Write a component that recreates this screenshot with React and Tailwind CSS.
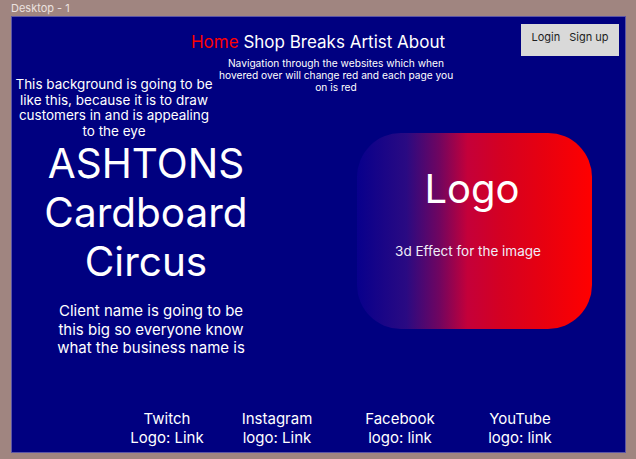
import React from "react";

const footerLinks = [
  { name: "Twitch", link: "Logo: Link", w: "w-[110px]" },
  { name: "Instagram", link: "logo: Link", w: "w-[110px]" },
  { name: "Facebook", link: "logo: link", w: "w-[136px]" },
  { name: "YouTube", link: "logo: link", w: "w-[104px]" },
];

export default function App() {
  return (
    <div
      className="w-[636px] h-[459px] bg-[#a08580] overflow-hidden"
      style={{ fontFamily: "Inter, 'Noto Sans', sans-serif" }}
    >
      <div className="h-[16px] pl-[11px] text-[11px] leading-[16px] text-[#ebe1df]">Desktop - 1</div>

      {/* frame */}
      <div className="ml-[11px] w-[615px] h-[437px] bg-[#000080] border border-[#5b55a6] flex flex-col text-white">
        {/* top row: nav + auth */}
        <div className="flex items-start pt-[7px]">
          <nav className="ml-[156px] mt-[7px] w-[300px] text-center text-[17px] leading-[22px] whitespace-nowrap">
            <span className="text-[#ff0000]">Home</span> Shop Breaks Artist About
          </nav>
          <div className="ml-auto mr-[6px] w-[98px] h-[32px] pb-[6px] bg-[#d9d9d9] flex items-center justify-center gap-[9px] text-[11px] text-[#1e1e1e]">
            <span>Login</span>
            <span>Sign up</span>
          </div>
        </div>

        <div className="flex items-start">
          {/* left column */}
          <div className="w-[207px] shrink-0 flex flex-col">
            <p className="ml-[2px] mt-[21px] w-[200px] text-center text-[13.5px] leading-[15.5px] whitespace-nowrap">
              This background is going to be
              <br />
              like this, because it is to draw
              <br />
              customers in and is appealing
              <br />
              to the eye
            </p>
            <h1 className="ml-[4px] w-[260px] text-center text-[40.5px] leading-[49px] whitespace-nowrap">
              ASHTONS
              <br />
              Cardboard
              <br />
              Circus
            </h1>
            <p className="ml-[29px] mt-[16px] w-[220px] text-center text-[15px] leading-[18.5px] whitespace-nowrap">
              Client name is going to be
              <br />
              this big so everyone know
              <br />
              what the business name is
            </p>
          </div>

          {/* right column */}
          <div className="flex flex-col">
            <p className="mt-[1px] w-[234px] text-center text-[10.2px] leading-[12px] whitespace-nowrap">
              Navigation through the websites which when
              <br />
              hovered over will change red and each page you
              <br />
              on is red
            </p>
            <div className="ml-[138px] mt-[40px] w-[235px] h-[196px] rounded-[44px] bg-[linear-gradient(90deg,#08008c_0%,#2a0a82_21%,#700560_35%,#c4003a_47%,#d40022_61%,#e8000f_80%,#ff0000_100%)] flex flex-col items-center pt-[32px] pr-[5px]">
              <div className="text-[40px] leading-[48px]">Logo</div>
              <div className="mt-[30px] mr-[8px] text-[13.5px] leading-[16px] text-[#f0eef8]">3d Effect for the image</div>
            </div>
          </div>
        </div>

        {/* footer */}
        <div className="mt-auto pb-[5px] pl-[100px] flex">
          {footerLinks.map((l) => (
            <div key={l.name} className={`${l.w} text-center text-[15px] leading-[19px] whitespace-nowrap`}>
              {l.name}
              <br />
              {l.link}
            </div>
          ))}
        </div>
      </div>
    </div>
  );
}
